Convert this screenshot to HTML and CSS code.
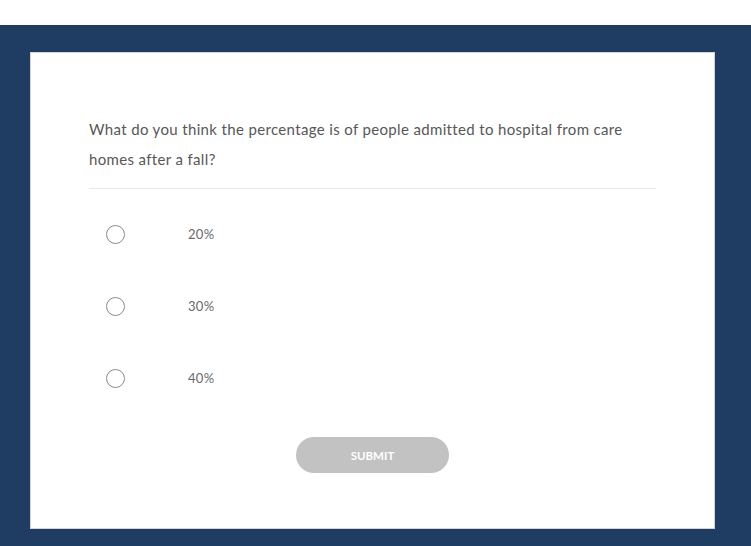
FILE: index.html
```html
<!DOCTYPE html>
<html lang="en">
<head>
    <meta charset="UTF-8">
    <meta name="viewport" content="width=device-width, initial-scale=1.0">
    <title>Quiz</title>
    <link rel="stylesheet" href="styles.css">
</head>
<body>
    <div class="top-bar"></div>
    <div class="stage">
        <form class="quiz-card">
            <p class="question">What do you think the percentage is of people admitted to hospital from care homes after a fall?</p>
            <div class="options">
                <label class="option">
                    <input type="radio" name="answer" value="20">
                    <span class="option-text">20%</span>
                </label>
                <label class="option">
                    <input type="radio" name="answer" value="30">
                    <span class="option-text">30%</span>
                </label>
                <label class="option">
                    <input type="radio" name="answer" value="40">
                    <span class="option-text">40%</span>
                </label>
            </div>
            <div class="actions">
                <button type="button" class="submit-btn">SUBMIT</button>
            </div>
        </form>
    </div>
</body>
</html>
```

FILE: styles.css
```css
body {
    margin: 0;
    background-color: #fff;
    font-family: Lato, "Noto Sans", sans-serif;
}
.top-bar {
    height: 25px;
    background-color: #fff;
}
.stage {
    background-color: #1f3d63;
    padding: 27px 36px 18px 30px;
}
.quiz-card {
    background-color: #fff;
    border: 1px solid #d4d4d4;
    padding: 61px 58px 55px 58px;
}
.question {
    margin: 0;
    padding-bottom: 14px;
    border-bottom: 1px solid #e8e8e8;
    font-size: 15px;
    line-height: 30px;
    letter-spacing: 0.35px;
    color: #575757;
}
.options {
    padding-top: 36px;
}
.option {
    display: flex;
    align-items: center;
    height: 18px;
    margin-bottom: 54px;
    padding-left: 17px;
    cursor: pointer;
}
.option input {
    appearance: none;
    width: 19px;
    height: 19px;
    margin: 0;
    border: 1px solid #8a8a8a;
    border-radius: 50%;
    background: #fff;
}
.option-text {
    margin-left: 63px;
    font-size: 13px;
    letter-spacing: 0.3px;
    color: #6a6a6a;
}
.actions {
    display: flex;
    justify-content: center;
    margin-top: -4px;
}
.submit-btn {
    width: 153px;
    height: 36px;
    border: none;
    border-radius: 18px;
    background-color: #c2c2c2;
    color: #fff;
    font-family: Lato, sans-serif;
    font-weight: bold;
    font-size: 11.5px;
}
```
